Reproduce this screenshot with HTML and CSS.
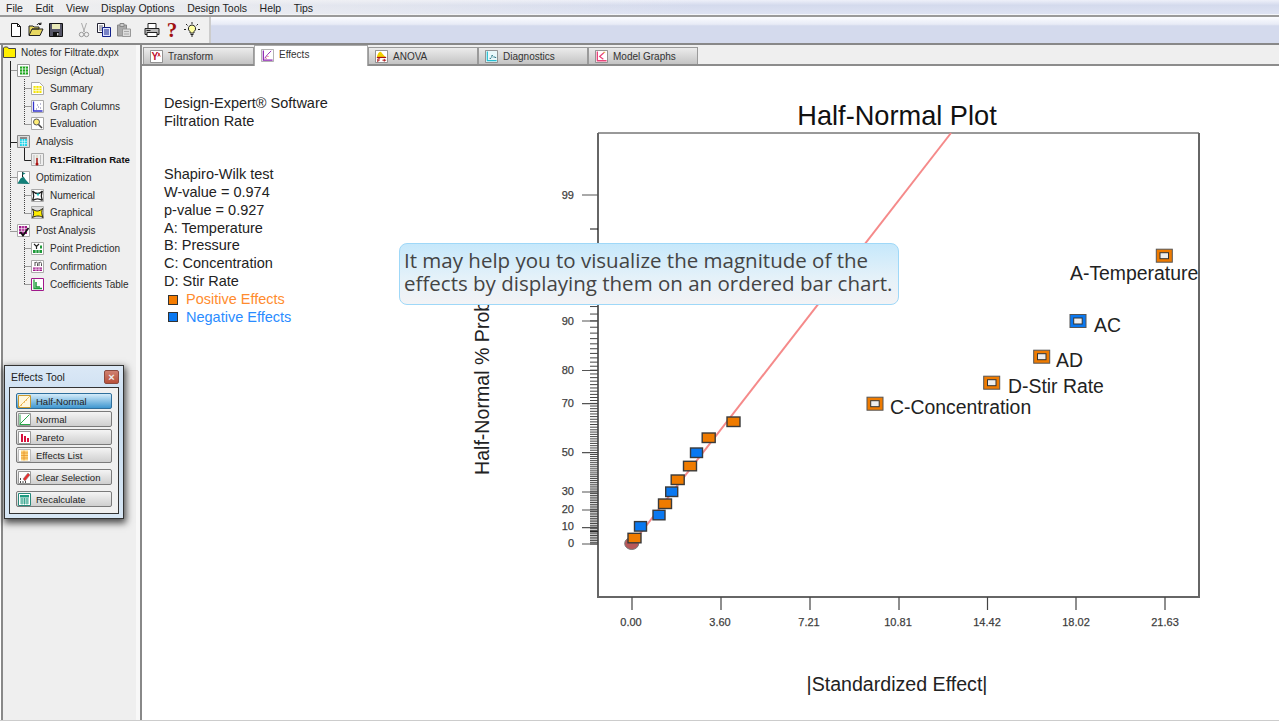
FILE: index.html
```html
<!DOCTYPE html>
<html lang="en">
<head>
<meta charset="utf-8">
<title>Design-Expert</title>
<link rel="stylesheet" href="styles.css">
</head>
<body>
<div class="app">
  <nav class="menubar">
    <span>File</span><span>Edit</span><span>View</span><span>Display Options</span><span>Design Tools</span><span>Help</span><span>Tips</span>
  </nav>
  <div class="toolbar">
    <div class="tools">
      <svg class="tool" viewBox="0 0 16 16"><path d="M3.500 1.500h6l3 3v10h-9z" fill="#fff" stroke="#111"/><path d="M9.500 1.500v3h3" fill="none" stroke="#111"/></svg>
      <svg class="tool" viewBox="0 0 16 16"><path d="M1 13V4h4l1 1h5v2H4l-3 6.500h11l3-6.500H4" fill="#e8d860" stroke="#222"/><path d="M9 3c1-2 3-2 4-1m0-1.500v2h-2" fill="none" stroke="#222"/></svg>
      <svg class="tool" viewBox="0 0 16 16"><path d="M1.500 1.500h13v13h-13z" fill="#556" stroke="#111"/><path d="M4 2h8v5H4z" fill="#e8e8b8"/><path d="M5 10h6v4.500H5z" fill="#111"/><path d="M9 11h1.500v2.500H9z" fill="#ccc"/></svg>
      <svg class="tool group" viewBox="0 0 16 16"><path d="M5.500 1l3 9M10.500 1l-3 9" stroke="#aaa" fill="none"/><circle cx="5.500" cy="12.500" r="2.200" fill="none" stroke="#999"/><circle cx="10.500" cy="12.500" r="2.200" fill="none" stroke="#999"/></svg>
      <svg class="tool" viewBox="0 0 16 16"><path d="M1.500 1.500h7v9h-7z" fill="#fff" stroke="#223"/><path d="M3 4h4M3 6h4M3 8h4" stroke="#667"/><path d="M6.500 5.500h8v9h-8z" fill="#dfe4ff" stroke="#12208a"/><path d="M8 8h5M8 10h5M8 12h5" stroke="#12208a"/></svg>
      <svg class="tool" viewBox="0 0 16 16"><path d="M1.500 3h9v11h-9z" fill="#aaa" stroke="#888"/><path d="M4 1.500h4v3H4z" fill="#ccc" stroke="#888"/><path d="M6.500 7h8v7.500h-8z" fill="#ddd" stroke="#999"/><path d="M8 9.500h5M8 12h5" stroke="#aaa"/></svg>
      <svg class="tool group" viewBox="0 0 16 16"><path d="M4 1.500h8v5H4z" fill="#fff" stroke="#222"/><path d="M1 6.500h14v6H1z" fill="#bbb" stroke="#222"/><path d="M3 10.500h10v4H3z" fill="#fff" stroke="#222"/><path d="M2.500 8.500h4" stroke="#222"/></svg>
      <span class="tool help">?</span>
      <svg class="tool" viewBox="0 0 16 16"><path d="M8 3a3.600 3.600 0 0 0-2 6.600V11h4V9.600A3.600 3.600 0 0 0 8 3z" fill="#ffffa0" stroke="#222"/><path d="M6.500 12.500h3M7 14h2" stroke="#222"/><path d="M8 0v2M2 2l1.500 1.500M14 2l-1.500 1.500M0 7.500h2M14 7.500h2" stroke="#222"/></svg>
    </div>
    <div class="band"></div>
  </div>
  <div class="workspace">
    <aside class="sidebar">
      <svg class="tree-lines" viewBox="3 45 40 250" width="40" height="250">
        <path d="M10.500 61v86M10.500 142.500h7M24.500 147v13.500h7" fill="none" stroke="#222"/>
        <path d="M10.500 147v84M10.500 70.500h7M10.500 177.500h7M10.500 231.500h7M24.500 79v45.500M24.500 88.500h7M24.500 106.500h7M24.500 124.500h7M24.500 186v27.500M24.500 195.500h7M24.500 213.500h7M24.500 239v45.500M24.500 248.500h7M24.500 266.500h7M24.500 284.500h7" fill="none" stroke="#444" stroke-dasharray="1 1"/>
      </svg>
      <div class="node root">
        <svg class="ticon" viewBox="0 0 13 13"><path d="M.5 11.500V2l1-1h3l1 1.500h7v9z" fill="#ffef00" stroke="#444"/></svg>
        <span>Notes for Filtrate.dxpx</span>
      </div>
      <div class="node lv1">
        <svg class="ticon" viewBox="0 0 13 13"><path d="M.5.500h12v12H.5z" fill="#fff" stroke="#999"/><path d="M3 2.500h8v8H3z" fill="#1da51d"/><path d="M3 5h8M3 8h8M5.500 2.500v8M8.500 2.500v8" stroke="#fff" stroke-width=".7"/></svg>
        <span>Design (Actual)</span>
      </div>
      <div class="node lv2">
        <svg class="ticon" viewBox="0 0 13 13"><path d="M.5.500h8l4 4v8H.5z" fill="#fff" stroke="#aaa"/><path d="M2.500 4h8v7h-8z" fill="#f4e400"/><path d="M2.500 6.300h8M2.500 8.600h8M5 4v7M8 4v7" stroke="#fff" stroke-width=".7"/></svg>
        <span>Summary</span>
      </div>
      <div class="node lv2">
        <svg class="ticon" viewBox="0 0 13 13"><path d="M.5.500h12v12H.5z" fill="#fff" stroke="#aaa"/><path d="M2.500 1.500v9.500h9" fill="none" stroke="#33c" stroke-width="1.300"/><path d="M5 9h1M7 7h1M9 8h1M9 4h1M6 5h1" stroke="#77a"/></svg>
        <span>Graph Columns</span>
      </div>
      <div class="node lv2">
        <svg class="ticon" viewBox="0 0 13 13"><path d="M.5.500h12v12H.5z" fill="#fff" stroke="#aaa"/><circle cx="5.500" cy="5" r="3" fill="#ffee77" stroke="#555"/><path d="M7.500 7.500l3.500 3.500" stroke="#444" stroke-width="1.600"/></svg>
        <span>Evaluation</span>
      </div>
      <div class="node lv1">
        <svg class="ticon" viewBox="0 0 13 13"><path d="M.5.500h12v12H.5z" fill="#dcdcdc" stroke="#888"/><path d="M3 2h7v9H3z" fill="#1ad2e8"/><path d="M3 2h7v2H3z" fill="#888"/><path d="M3 6.300h7M3 8.600h7M5.300 4v7M7.600 4v7" stroke="#fff" stroke-width=".6"/></svg>
        <span>Analysis</span>
      </div>
      <div class="node lv2 strong">
        <svg class="ticon" viewBox="0 0 13 13"><path d="M.5.500h12v12H.5z" fill="#eee" stroke="#aaa"/><path d="M3 2v9M9.500 2v9" stroke="#bbb"/><path d="M5 2h2v7H5z" fill="#ddc"/><path d="M5.300 5h1.400v6H5.300z" fill="#a11"/><circle cx="6" cy="11" r="1.500" fill="#a11"/></svg>
        <span>R1:Filtration Rate</span>
      </div>
      <div class="node lv1">
        <svg class="ticon" viewBox="0 0 13 13"><path d="M.5.500h12v12H.5z" fill="#fff" stroke="#aaa"/><path d="M.5 12.500l3-5 3-2 2 3 4 4.500z" fill="#127f78"/><path d="M5.500 6V1" stroke="#222"/><path d="M5.500 1l3 1.500-3 1.500z" fill="#127f78"/></svg>
        <span>Optimization</span>
      </div>
      <div class="node lv2">
        <svg class="ticon" viewBox="0 0 13 13"><path d="M.5.500h12v12H.5z" fill="#fff" stroke="#aaa"/><path d="M1.500 2c2 2 3.500 2.500 5 2.500S10 3.500 11.500 2M11.500 2c-1.500 3-1.500 6 0 9.500M1.500 2c1.500 3 1.500 6 0 9.500M1.500 11.500c3-2 7-2 10 0" fill="none" stroke="#222" stroke-width="1.300"/><path d="M5.500 4.500h3L7 7.500z" fill="#18c8c8"/></svg>
        <span>Numerical</span>
      </div>
      <div class="node lv2">
        <svg class="ticon" viewBox="0 0 13 13"><path d="M.5.500h12v12H.5z" fill="#ddd" stroke="#aaa"/><path d="M1.500 3c2 1.500 3.500 2 5 2s3.500-1 5-2.500c-1 3-1 5.500.5 9-3-2-7-2-10.500 0 1.500-3 1.500-5.500 0-8.500z" fill="#ffee00" stroke="#222"/></svg>
        <span>Graphical</span>
      </div>
      <div class="node lv1">
        <svg class="ticon" viewBox="0 0 13 13"><path d="M.5.500h12v12H.5z" fill="#fff" stroke="#aaa"/><path d="M2 2h8v8H2z" fill="#a0188a"/><path d="M2 4.700h8M2 7.300h8M4.700 2v8M7.300 2v8" stroke="#fff" stroke-width=".7"/><path d="M3.500 8l2.500 3.500L11.500 4" fill="none" stroke="#111" stroke-width="1.700"/></svg>
        <span>Post Analysis</span>
      </div>
      <div class="node lv2">
        <svg class="ticon" viewBox="0 0 13 13"><path d="M.5.500h12v12H.5z" fill="#fff" stroke="#aaa"/><path d="M3 2l2.500 2.500L8 2M5.500 4.500V7" fill="none" stroke="#222" stroke-width="1.200"/><path d="M2 8h9v3H2zM9 3.500h2v3H9z" fill="#1e9a3a"/><path d="M5 8v3M8 8v3" stroke="#fff" stroke-width=".7"/></svg>
        <span>Point Prediction</span>
      </div>
      <div class="node lv2">
        <svg class="ticon" viewBox="0 0 13 13"><path d="M.5.500h12v12H.5z" fill="#fff" stroke="#aaa"/><path d="M4 2v4M4 3c1-1.200 2.500-1 2.500.5V6M8 2v4M8 3c1-1.200 2.500-1 2.500.5V6" fill="none" stroke="#555"/><path d="M2 7.500h9v3.500H2z" fill="#a0188a"/><path d="M5 7.500v3.500M8 7.500v3.500M2 9.200h9" stroke="#fff" stroke-width=".7"/></svg>
        <span>Confirmation</span>
      </div>
      <div class="node lv2">
        <svg class="ticon" viewBox="0 0 13 13"><path d="M.5.500h12v12H.5z" fill="#fff" stroke="#a0188a"/><path d="M3 1.500V10.500h8" fill="none" stroke="#1e9a3a" stroke-width="1.300"/><path d="M5 4v5h4" fill="none" stroke="#1e9a3a" stroke-width="1.500"/></svg>
        <span>Coefficients Table</span>
      </div>
    </aside>
    <main class="main">
      <div class="tabs">
        <div class="tab first">
          <svg class="ticon" viewBox="0 0 14 14"><path d="M.5.500h13v13H.5z" fill="#fff" stroke="#888"/><text x="1.500" y="11" class="tab-y">Y</text><path d="M9 3l2 4M10 3.500L8.500 7" stroke="#c11" fill="none"/></svg>
          <span>Transform</span>
        </div>
        <div class="tab active">
          <svg class="ticon" viewBox="0 0 14 14"><path d="M.5.500h13v13H.5z" fill="#fff" stroke="#aaa"/><path d="M2.500 1.500v10.500h10" fill="none" stroke="#8a1fb0" stroke-width="1.300"/><path d="M4 10l3-4 4-4" fill="none" stroke="#8a1fb0"/><path d="M5 10h1M7 8h1" stroke="#d24"/></svg>
          <span>Effects</span>
        </div>
        <div class="tab">
          <svg class="ticon" viewBox="0 0 14 14"><path d="M.5.500h13v13H.5z" fill="#fff" stroke="#888"/><path d="M2 8c1-5 3-6 4-6s2 3 6 6z" fill="#f0d000"/><path d="M2 8h10" stroke="#a11" stroke-width="1.200"/><path d="M3 13V9.500h2.500M3 11h2M8 11h4M10 9.500v3" fill="none" stroke="#a11"/></svg>
          <span>ANOVA</span>
        </div>
        <div class="tab">
          <svg class="ticon" viewBox="0 0 14 14"><path d="M.5.500h13v13H.5z" fill="#e9f8fa" stroke="#888"/><path d="M2.500 1.500v10h10" fill="none" stroke="#26bcd0" stroke-width="1.300"/><path d="M5 9h1.500M7 6h1.500M9 7.500h1.500M10.500 8H12M6.500 7.500H8" stroke="#167" /></svg>
          <span>Diagnostics</span>
        </div>
        <div class="tab">
          <svg class="ticon" viewBox="0 0 14 14"><path d="M.5.500h13v13H.5z" fill="#fff" stroke="#888"/><path d="M2.500 1.500v10h10" fill="none" stroke="#e8447a" stroke-width="1.500"/><path d="M9.500 3L5 7l4 3" fill="none" stroke="#e8447a" stroke-width="1.300"/><path d="M9 2.500h2" stroke="#e0a020"/></svg>
          <span>Model Graphs</span>
        </div>
      </div>
      <div class="content">
        <div class="notes">
          <p>Design-Expert® Software</p>
          <p>Filtration Rate</p>
          <p class="spaced">Shapiro-Wilk test</p>
          <p>W-value = 0.974</p>
          <p>p-value = 0.927</p>
          <p>A: Temperature</p>
          <p>B: Pressure</p>
          <p>C: Concentration</p>
          <p>D: Stir Rate</p>
          <p class="legend positive"><i></i>Positive Effects</p>
          <p class="legend negative"><i></i>Negative Effects</p>
        </div>
        <svg class="plot" viewBox="460 100 760 600" width="760" height="600">
          <text class="title" x="897" y="125" text-anchor="middle">Half-Normal Plot</text>
          <rect x="598" y="133" width="601" height="464" fill="#fff"/>
          <path d="M598 133H1199" stroke="#333" fill="none"/>
          <path d="M598 133V597H1199V133" stroke="#666" stroke-width="2" fill="none"/>
          <path d="M632 597v13M721 597v13M810 597v13M899 597v13M987.500 597v13M1076 597v13M1165 597v13" stroke="#444" stroke-width="1.200"/>
          <g class="tick-x" text-anchor="middle">
            <text x="631" y="626">0.00</text><text x="720" y="626">3.60</text><text x="809" y="626">7.21</text><text x="898" y="626">10.81</text><text x="987" y="626">14.42</text><text x="1076" y="626">18.02</text><text x="1165" y="626">21.63</text>
          </g>
          <path d="M582 195h16M582 321h16M582 370.500h16M582 403.700h16M582 452.700h16M582 492h16M582 510h16M582 527.700h16M582 544h16" stroke="#555" stroke-width="1.200"/>
          <path d="M590 229h8M590 531.500h8" stroke="#111"/>
          <path stroke="#444" stroke-width="1" fill="none" d="M590 544h8m-8-1.700h8m-8-1.700h8m-8-1.700h8m-8-1.700h8m-8-1.700h8m-8-1.700h8m-8-1.700h8m-8-1.700h8m-8-1.700h8m-8-1.700h8m-8-1.730h8m-8-1.730h8m-8-1.730h8m-8-1.730h8m-8-1.730h8m-8-1.730h8m-8-1.730h8m-8-1.730h8m-8-1.730h8m-8-1.730h8m-8-1.790h8m-8-1.790h8m-8-1.790h8m-8-1.790h8m-8-1.790h8m-8-1.790h8m-8-1.790h8m-8-1.790h8m-8-1.790h8m-8-1.790h8m-8-1.890h8m-8-1.890h8m-8-1.890h8m-8-1.890h8m-8-1.890h8m-8-1.890h8m-8-1.890h8m-8-1.890h8m-8-1.890h8m-8-1.890h8m-8-2.040h8m-8-2.040h8m-8-2.040h8m-8-2.040h8m-8-2.040h8m-8-2.040h8m-8-2.040h8m-8-2.040h8m-8-2.040h8m-8-2.040h8m-8-2.270h8m-8-2.270h8m-8-2.270h8m-8-2.270h8m-8-2.270h8m-8-2.270h8m-8-2.270h8m-8-2.270h8m-8-2.270h8m-8-2.270h8m-8-2.640h8m-8-2.640h8m-8-2.640h8m-8-2.640h8m-8-2.640h8m-8-2.640h8m-8-2.640h8m-8-2.640h8m-8-2.640h8m-8-2.640h8m-8-2.900h8m-8-3h8m-8-3.100h8m-8-3.200h8m-8-3.240h8m-8-3.350h8m-8-3.440h8m-8-3.540h8m-8-3.670h8m-8-3.800h8m-8-3.930h8m-8-4.100h8m-8-4.260h8m-8-4.460h8m-8-4.660h8m-8-4.920h8m-8-5.190h8m-8-5.520h8m-8-5.890h8m-8-6.330h8m-8-6.850h8m-8-7.500h8"/>
          <g class="tick-y" text-anchor="end">
            <text x="574" y="199">99</text><text x="574" y="325">90</text><text x="574" y="374">80</text><text x="574" y="407">70</text><text x="574" y="456">50</text><text x="574" y="495">30</text><text x="574" y="513">20</text><text x="574" y="530">10</text><text x="574" y="547">0</text>
          </g>
          <path d="M632 544L951 133" stroke="#f58a8a" stroke-width="2" fill="none"/>
          <ellipse cx="631.700" cy="543.500" rx="7" ry="6" fill="#b85858" stroke="#777"/>
          <g class="pt orange">
            <rect x="727" y="417" width="13" height="9.500"/><rect x="702.200" y="433" width="13" height="9.500"/><rect x="683.500" y="461.300" width="13" height="9.500"/><rect x="671.200" y="475" width="13" height="9.500"/><rect x="658.500" y="499" width="13" height="9.500"/><rect x="628" y="533.300" width="13" height="9.500"/>
          </g>
          <g class="pt blue">
            <rect x="690.500" y="448" width="12" height="9.500"/><rect x="665.700" y="487" width="12" height="9.500"/><rect x="653" y="510.300" width="12" height="9.500"/><rect x="634.500" y="521.600" width="12" height="9.500"/>
          </g>
          <g class="sel orange">
            <rect x="1156.300" y="249.200" width="16" height="13"/><rect x="1033.700" y="350.200" width="16" height="13"/><rect x="983.700" y="376.200" width="16" height="13"/><rect x="867" y="397.200" width="16" height="13"/>
          </g>
          <g class="sel blue"><rect x="1070" y="314.500" width="16" height="13"/></g>
          <g class="sel-in">
            <rect x="1160" y="252.700" width="8.500" height="6"/><rect x="1037.500" y="353.700" width="8.500" height="6"/><rect x="987.500" y="379.700" width="8.500" height="6"/><rect x="870.700" y="400.700" width="8.500" height="6"/><rect x="1073.700" y="318" width="8.500" height="6"/>
          </g>
          <g class="pt-label">
            <text x="1070" y="280">A-Temperature</text><text x="1094" y="332">AC</text><text x="1056" y="367">AD</text><text x="1008" y="393">D-Stir Rate</text><text x="890" y="414">C-Concentration</text>
          </g>
          <text class="axis" transform="translate(489 475) rotate(-90)">Half-Normal % Probability</text>
          <text class="axis" x="897" y="691" text-anchor="middle">|Standardized Effect|</text>
        </svg>
      </div>
    </main>
  </div>
  <div class="tool-window">
    <div class="tw-title"><span>Effects Tool</span><span class="tw-close">×</span></div>
    <div class="tw-panel">
      <button class="tw-btn selected" type="button">
        <svg class="ticon" viewBox="0 0 13 13"><path d="M.5.500h12v12H.5z" fill="#fff7dd" stroke="#c89a30"/><path d="M1 12L12 1" stroke="#e8c060"/><path d="M3 10h1M6 7h1M8 5h1" stroke="#e89020"/></svg>
        <span>Half-Normal</span>
      </button>
      <button class="tw-btn" type="button">
        <svg class="ticon" viewBox="0 0 13 13"><path d="M.5.500h12v12H.5z" fill="#fff" stroke="#999"/><path d="M1.500 11.500L11.500 1.500M2 1.500v10h10" fill="none" stroke="#2aa84a"/></svg>
        <span>Normal</span>
      </button>
      <button class="tw-btn" type="button">
        <svg class="ticon" viewBox="0 0 13 13"><path d="M.5.500h12v12H.5z" fill="#fff" stroke="#999"/><path d="M3 3h2v8H3zM6 5h2v6H6zM9 7h2v4H9z" fill="#d8103c"/></svg>
        <span>Pareto</span>
      </button>
      <button class="tw-btn" type="button">
        <svg class="ticon" viewBox="0 0 13 13"><path d="M.5.500h12v12H.5z" fill="#fff" stroke="#bbb"/><path d="M3 1.500h7v10H3z" fill="#fbd27a"/><path d="M3 4h7M3 6.500h7M3 9h7M6 1.500v10" stroke="#e89020" stroke-width=".7"/></svg>
        <span>Effects List</span>
      </button>
      <button class="tw-btn apart" type="button">
        <svg class="ticon" viewBox="0 0 13 13"><path d="M.5.500h12v12H.5z" fill="#fff" stroke="#999"/><path d="M5 8l5-6 2 2-5 6z" fill="#e83030" stroke="#888" stroke-width=".6"/><path d="M2 11h1M4.500 11h1M7 11h1M2 8h1" stroke="#111" stroke-width="1.300"/></svg>
        <span>Clear Selection</span>
      </button>
      <button class="tw-btn apart" type="button">
        <svg class="ticon" viewBox="0 0 13 13"><path d="M.5.500h12v12H.5z" fill="#fff" stroke="#27887a"/><path d="M2 2h9v2.500H2z" fill="#1e9a80"/><path d="M2 6h9M2 8h9M2 10h9M4 5v6.500M6.500 5v6.500M9 5v6.500" stroke="#1e9a80" stroke-width=".8"/></svg>
        <span>Recalculate</span>
      </button>
    </div>
  </div>
  <div class="callout">It may help you to visualize the magnitude of the<br>effects by displaying them on an ordered bar chart.</div>
</div>
</body>
</html>
```

FILE: styles.css
```css
html, body {
  margin: 0;
  padding: 0;
  background: #fff;
}
body {
  width: 1279px;
  height: 721px;
  overflow: hidden;
  font-family: "Liberation Sans", Arial, sans-serif;
  color: #222;
}
.app {
  position: relative;
  height: 720px;
  display: flex;
  flex-direction: column;
  border-bottom: 1px solid #ccc;
  box-sizing: content-box;
}
.menubar {
  height: 15px;
  flex: none;
  display: flex;
  gap: 12.5px;
  padding-left: 6px;
  align-items: center;
  font-size: 10.5px;
  color: #222;
  background: linear-gradient(90deg, rgba(240,240,240,1) 0, rgba(240,240,240,.6) 300px, rgba(240,240,240,0) 700px),
              linear-gradient(180deg, #eef0f9 0, #d4daed 35%, #dde2f2 90%, #fff 100%);
}
.toolbar {
  height: 26px;
  flex: none;
  display: flex;
  border-top: 2px solid #9a9a9a;
  border-bottom: 2px solid #888;
}
.tools {
  width: 201px;
  padding-left: 8px;
  display: flex;
  align-items: center;
  gap: 4px;
  background: #f0f0f0;
  border-right: 2px solid #ccc;
}
.tool {
  width: 16px;
  height: 16px;
  flex: none;
}
.tool.group {
  margin-left: 8px;
}
.help {
  font: bold 21px/16px "Liberation Serif", serif;
  color: #a01010;
  text-align: center;
  margin-left: 0;
}
.band {
  flex: 1;
  background: linear-gradient(180deg, #fbfcff 0, #e8ebf6 28%, #d4daed 34%, #d4daed 100%);
}
.workspace {
  flex: 1;
  min-height: 0;
  display: flex;
}
.sidebar {
  position: relative;
  flex: none;
  width: 137px;
  margin-left: 1px;
  border-left: 2px solid #888;
  border-right: 2px solid #888;
  background: linear-gradient(90deg, #efefef 133px, #f8f8f8 133px);
  box-sizing: content-box;
}
.tree-lines {
  position: absolute;
  left: 0;
  top: 0;
}
.node {
  position: relative;
  height: 17.8px;
  display: flex;
  align-items: center;
  gap: 6px;
  font-size: 10px;
  color: #2c2c2c;
  white-space: nowrap;
}
.node.root {
  height: 14px;
  margin-bottom: 2.6px;
  gap: 5px;
  padding-left: 0;
}
.node.lv1 {
  padding-left: 14px;
}
.node.lv2 {
  padding-left: 28px;
}
.node.strong {
  font-size: 9.6px;
  font-weight: bold;
  color: #111;
}
.ticon {
  width: 13px;
  height: 13px;
  flex: none;
}
.main {
  flex: 1;
  min-width: 0;
  display: flex;
  flex-direction: column;
}
.tabs {
  height: 19px;
  flex: none;
  display: flex;
  align-items: flex-end;
  padding-left: 1px;
  background: #efefef;
  border-bottom: 2px solid #8c8c8c;
}
.tab {
  width: 110px;
  height: 17px;
  display: flex;
  align-items: center;
  gap: 5px;
  padding-left: 6px;
  box-sizing: border-box;
  font-size: 10px;
  color: #333;
  background: linear-gradient(180deg, #ececec, #c4c4c4);
  border: 1px solid #9a9a9a;
  border-bottom: none;
}
.tab.first {
  width: 111px;
}
.tab.active {
  width: 114px;
  height: 21px;
  margin-bottom: -2px;
  background: #fff;
  border-color: #aaa;
  align-items: flex-start;
  padding-top: 3px;
}
.tab-y {
  font: bold 11px "Liberation Sans", sans-serif;
  fill: #c01030;
}
.content {
  flex: 1;
  min-height: 0;
  display: flex;
  align-items: flex-start;
}
.notes {
  flex: none;
  width: 296px;
  padding: 29px 0 0 22px;
  font-size: 14.5px;
  line-height: 17.8px;
  color: #222;
}
.notes p {
  margin: 0;
  white-space: nowrap;
}
.notes .spaced {
  margin-top: 35.6px;
}
.legend {
  display: flex;
  align-items: center;
  gap: 8px;
  padding-left: 4px;
}
.legend i {
  width: 8px;
  height: 8px;
  border: 1px solid #333;
}
.positive {
  color: #ff8c2e;
}
.positive i {
  background: #f57c00;
}
.negative {
  color: #2a8cff;
}
.negative i {
  background: #0a78f0;
}
.plot {
  flex: none;
  margin-top: 34px;
  display: block;
}
.title {
  font-size: 27.2px;
  fill: #111;
}
.axis {
  font-size: 19.6px;
  fill: #222;
}
.tick-x text,
.tick-y text {
  font-size: 11px;
  fill: #333;
  stroke: #555;
  stroke-width: .25;
}
.pt rect {
  stroke: #3a3a3a;
  stroke-width: 1.4;
}
.orange rect {
  fill: #ef7b00;
}
.blue rect {
  fill: #0a78f0;
}
.sel rect {
  stroke: #555;
  stroke-width: 1;
}
.sel-in rect {
  fill: #eee;
  stroke: #333;
  stroke-width: 1;
}
.pt-label text {
  font-size: 19.4px;
  fill: #222;
}
.tool-window {
  position: absolute;
  left: 4px;
  top: 365px;
  width: 120px;
  height: 154px;
  box-sizing: border-box;
  display: flex;
  flex-direction: column;
  border: 1px solid #333;
  padding: 0 4px 4px;
  background: linear-gradient(180deg, #dbe8f6, #c6dcf0 30%, #d7e6f4);
  box-shadow: 1px 3px 7px 1px rgba(0,0,0,.7);
}
.tw-title {
  height: 21px;
  flex: none;
  display: flex;
  align-items: center;
  justify-content: space-between;
  padding: 0 0 0 2px;
  font-size: 10.5px;
  color: #222;
}
.tw-close {
  width: 15px;
  height: 14px;
  border-radius: 2px;
  background: linear-gradient(180deg, #d08070, #b8503a);
  border: 1px solid #8a4a40;
  box-sizing: border-box;
  color: #eee;
  font: bold 11px/12px "Liberation Sans", sans-serif;
  text-align: center;
}
.tw-panel {
  flex: 1;
  border: 1px solid #333;
  background: #f0f0f0;
  padding: 5px 6px;
  display: flex;
  flex-direction: column;
  gap: 2px;
}
.tw-btn {
  height: 16px;
  flex: none;
  display: flex;
  align-items: center;
  gap: 5px;
  padding: 0 0 0 1px;
  margin: 0;
  box-sizing: border-box;
  border: 1px solid #7a7a7a;
  border-radius: 2px;
  background: linear-gradient(180deg, #f4f4f4, #cfcfcf);
  font: 9.5px "Liberation Sans", sans-serif;
  color: #222;
}
.tw-btn .ticon {
  width: 13px;
  height: 13px;
}
.tw-btn.selected {
  background: linear-gradient(180deg, #d5ecfa, #3f97d0);
  border-color: #2f6f9c;
}
.tw-btn.apart {
  margin-top: 4px;
}
.callout {
  position: absolute;
  left: 399px;
  top: 243px;
  width: 500px;
  height: 62px;
  box-sizing: border-box;
  padding: 5px 4px;
  border: 1px solid #9fd8f8;
  border-radius: 8px;
  background: linear-gradient(180deg, #c6e8fb 0, #e4f1f9 55%, #f3f3f5 100%);
  font-family: "Open Sans", sans-serif;
  font-size: 20.5px;
  line-height: 23px;
  color: #444;
  white-space: nowrap;
}
```
